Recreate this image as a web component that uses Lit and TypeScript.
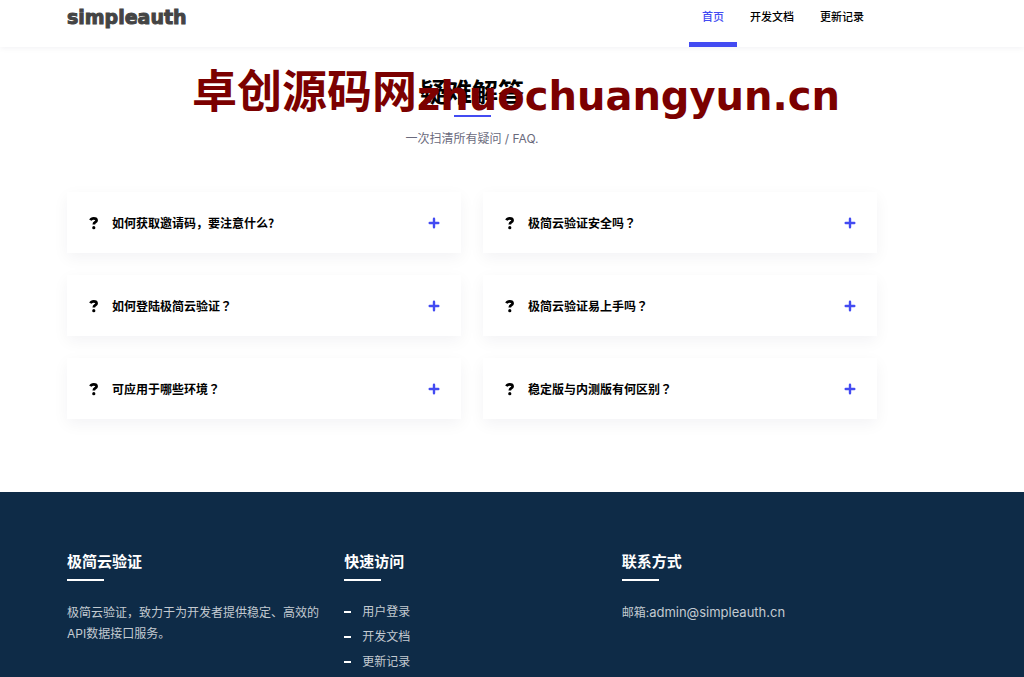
import { LitElement, html, css } from "lit";
import { customElement, property, state } from "lit/decorators.js";

@customElement("faq-item")
class FaqItem extends LitElement {
  @property() question = "";

  static styles = css`
    :host {
      display: block;
      background: #fff;
      box-shadow: 0 5px 15px rgba(8, 18, 64, 0.05);
    }
    .toggle {
      box-sizing: border-box;
      width: 100%;
      display: flex;
      align-items: center;
      gap: 12px;
      padding: 22px 21px;
      border: 0;
      background: none;
      color: #000;
      font: bold 12px/17px "Noto Sans CJK SC", sans-serif;
      text-align: left;
      cursor: pointer;
    }
    .label {
      flex: 1;
    }
    .centered {
      font-family: "Noto Sans CJK TC", sans-serif;
    }
    .mark {
      width: 12px;
      height: 14px;
      flex: none;
    }
    .plus {
      width: 12px;
      height: 12px;
      flex: none;
    }
  `;

  render() {
    const wide = this.question.endsWith("？");
    const text = wide ? this.question.slice(0, -1) : this.question;
    return html`<button class="toggle" type="button">
      <svg class="mark" viewBox="0 0 12 14" aria-hidden="true">
        <path
          d="M2.5 4.3C3.1 2.8 4.2 2.3 5.7 2.3c1.7 0 2.9.8 2.9 2.1 0 1.8-2.8 1.8-2.8 4"
          fill="none"
          stroke="#000"
          stroke-width="2.7"
        />
        <circle cx="5.8" cy="11.7" r="1.6" fill="#000" />
      </svg>
      <span class="label"
        >${text}${wide ? html`<span class="centered">？</span>` : ""}</span
      >
      <svg class="plus" viewBox="0 0 12 12" aria-hidden="true">
        <path
          d="M6 1.7v8.6M1.7 6h8.6"
          stroke="#434bf2"
          stroke-width="2.4"
          stroke-linecap="round"
        />
      </svg>
    </button>`;
  }
}

@customElement("app-root")
class AppRoot extends LitElement {
  @state() private active = "首页";

  private nav = ["首页", "开发文档", "更新记录"];
  private questions = [
    "如何获取邀请码，要注意什么?",
    "极简云验证安全吗？",
    "如何登陆极简云验证？",
    "极简云验证易上手吗？",
    "可应用于哪些环境？",
    "稳定版与内测版有何区别？",
  ];
  private links = ["用户登录", "开发文档", "更新记录"];

  static styles = css`
    :host {
      display: flex;
      flex-direction: column;
      position: relative;
      height: 100vh;
      overflow: hidden;
      background: #fff;
      font: 12px/21px Inter, "Noto Sans CJK SC", sans-serif;
    }
    .container {
      max-width: 810px;
      margin-left: 67px;
      margin-right: 22px;
    }
    .header {
      box-shadow: 0 1px 6px rgba(8, 18, 64, 0.06);
    }
    .bar {
      display: flex;
      justify-content: space-between;
      align-items: flex-start;
    }
    .logo {
      padding-top: 6px;
      color: #444;
      font: bold 19px/22px "DejaVu Sans", sans-serif;
      -webkit-text-stroke: 1px #444;
      text-decoration: none;
    }
    .nav {
      display: flex;
    }
    .nav-link {
      padding: 6px 13px 14px;
      border-bottom: 5px solid transparent;
      color: #000;
      font-size: 11px;
      font-weight: 500;
      line-height: 22px;
      text-decoration: none;
    }
    .nav-link.active {
      color: #434bf2;
      border-color: #434bf2;
    }
    .faq {
      flex: none;
      padding: 26px 0 73px;
    }
    .heading {
      display: flex;
      flex-direction: column;
      align-items: center;
    }
    .title {
      margin: 0;
      color: #000;
      font-size: 26px;
      line-height: 40px;
    }
    .rule {
      width: 37px;
      height: 2px;
      background: #434bf2;
      margin: 2px 0 11px;
    }
    .sub {
      margin: 0 0 43px;
      color: #6a6a7c;
    }
    .grid {
      display: grid;
      grid-template-columns: 1fr 1fr;
      gap: 22px;
    }
    .footer {
      flex: 1 0 auto;
      background: #0e2b47;
      color: #c3cad1;
      padding-top: 59px;
    }
    .columns {
      display: grid;
      grid-template-columns: repeat(3, 1fr);
      gap: 22px;
    }
    .footer-title {
      margin: 0;
      color: #fff;
      font-size: 15px;
      line-height: 22px;
    }
    .footer-rule {
      width: 37px;
      height: 2px;
      background: #fff;
      margin: 6px 0 21px;
    }
    .text {
      margin: 0;
    }
    .mail {
      color: inherit;
      font-size: 13px;
      text-decoration: none;
    }
    .links {
      list-style: none;
      margin: 0;
      padding: 0;
      display: grid;
      gap: 5px;
    }
    .link {
      display: flex;
      align-items: center;
      gap: 11px;
      color: inherit;
      line-height: 20px;
      text-decoration: none;
    }
    .link::before {
      content: "";
      width: 7px;
      height: 2px;
      background: #fff;
    }
    .watermark {
      position: absolute;
      top: 66px;
      left: 192px;
      color: #7b0000;
      font: bold 40px/60px "DejaVu Sans", "Noto Sans CJK SC", sans-serif;
      white-space: nowrap;
      pointer-events: none;
    }
    .watermark-cjk {
      font-family: "Noto Sans CJK SC", sans-serif;
      font-size: 45px;
      line-height: 40px;
      vertical-align: 2px;
    }
  `;

  render() {
    return html`
      <header class="header">
        <div class="container bar">
          <a class="logo" href="#">simpleauth</a>
          <nav class="nav">
            ${this.nav.map(
              (n) => html`<a
                class="nav-link ${n === this.active ? "active" : ""}"
                href="#"
                @click=${() => (this.active = n)}
                >${n}</a
              >`
            )}
          </nav>
        </div>
      </header>
      <main class="faq">
        <div class="container">
          <div class="heading">
            <h2 class="title">疑难解答</h2>
            <div class="rule"></div>
            <p class="sub">一次扫清所有疑问 / FAQ.</p>
          </div>
          <div class="grid">
            ${this.questions.map((q) => html`<faq-item .question=${q}></faq-item>`)}
          </div>
        </div>
      </main>
      <footer class="footer">
        <div class="container columns">
          <section>
            <h3 class="footer-title">极简云验证</h3>
            <div class="footer-rule"></div>
            <p class="text">极简云验证，致力于为开发者提供稳定、高效的API数据接口服务。</p>
          </section>
          <section>
            <h3 class="footer-title">快速访问</h3>
            <div class="footer-rule"></div>
            <ul class="links">
              ${this.links.map((l) => html`<li><a class="link" href="#">${l}</a></li>`)}
            </ul>
          </section>
          <section>
            <h3 class="footer-title">联系方式</h3>
            <div class="footer-rule"></div>
            <p class="text">邮箱:<a class="mail" href="mailto:admin@simpleauth.cn">admin@simpleauth.cn</a></p>
          </section>
        </div>
      </footer>
      <div class="watermark">
        <span class="watermark-cjk">卓创源码网</span>zhuochuangyun.cn
      </div>
    `;
  }
}
